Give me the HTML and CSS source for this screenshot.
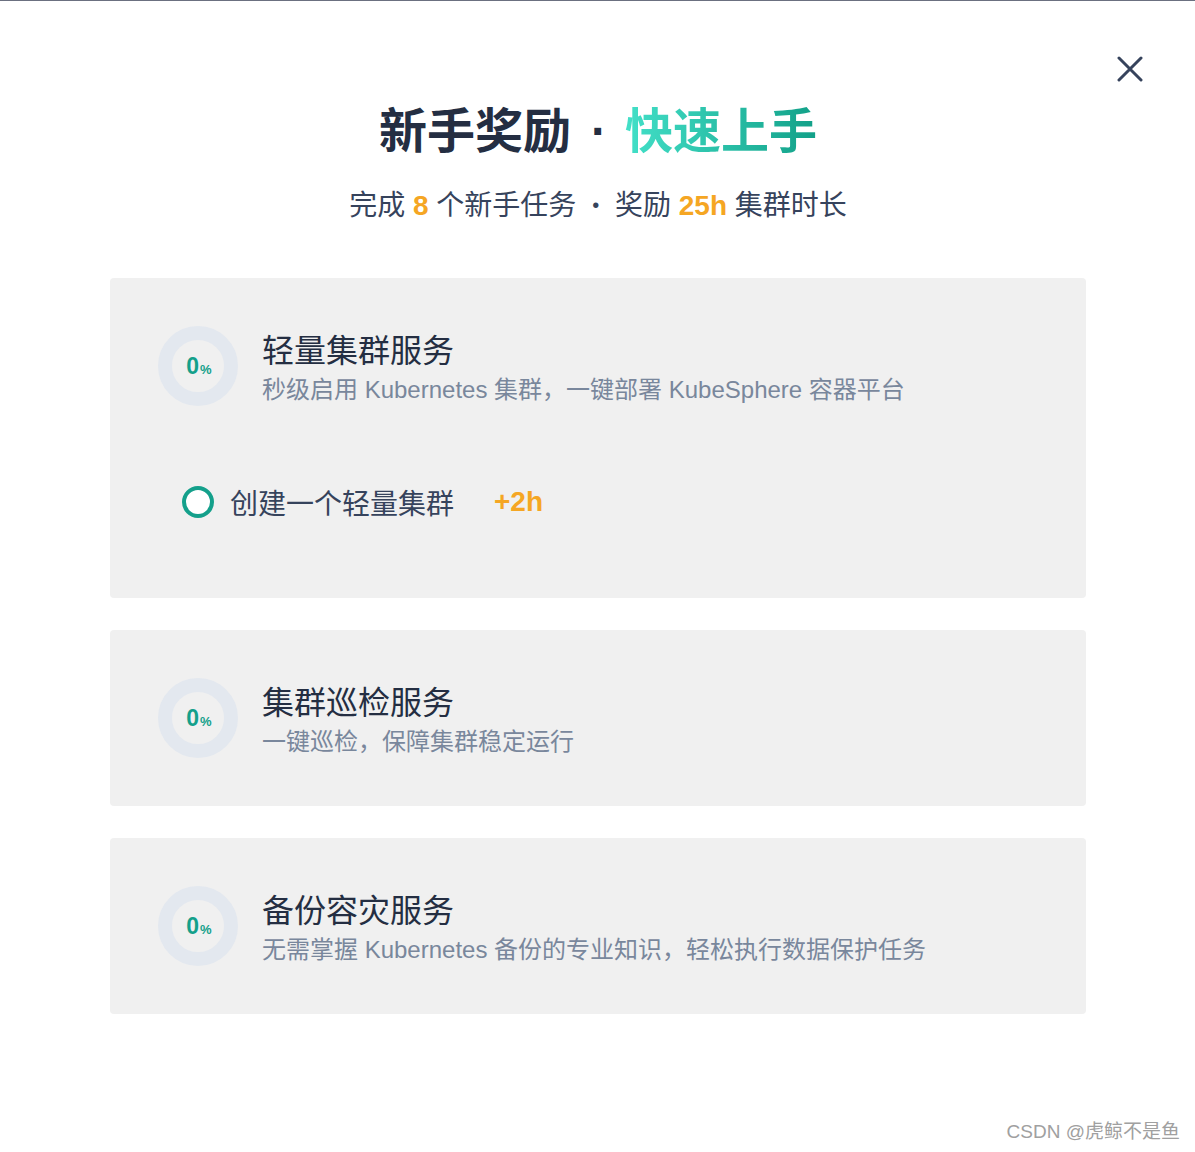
FILE: index.html
```html
<!DOCTYPE html>
<html lang="zh-CN">
<head>
<meta charset="utf-8">
<title>新手奖励</title>
<link rel="stylesheet" href="styles.css">
</head>
<body>
<div class="topline"></div>
<div class="modal">
  <button class="close" aria-label="关闭">
    <svg width="26" height="26" viewBox="0 0 26 26"><path d="M2 2 L24 24 M24 2 L2 24" stroke="#36435c" stroke-width="3" stroke-linecap="round"/></svg>
  </button>
  <h1 class="title">新手奖励<span class="mid">·</span><span class="grad">快速上手</span></h1>
  <p class="subtitle">完成 <b class="num">8</b> 个新手任务 <span class="dot">•</span> 奖励 <b class="num">25h</b> 集群时长</p>

  <div class="cards">
    <section class="card">
      <div class="card-head">
        <div class="ring"><span class="pct">0<small>%</small></span></div>
        <div class="info">
          <div class="name">轻量集群服务</div>
          <div class="desc">秒级启用 Kubernetes 集群，一键部署 KubeSphere 容器平台</div>
        </div>
      </div>
      <div class="tasks">
        <div class="task">
          <span class="check"></span>
          <span class="task-name">创建一个轻量集群</span>
          <span class="bonus">+2h</span>
        </div>
      </div>
    </section>

    <section class="card">
      <div class="card-head">
        <div class="ring"><span class="pct">0<small>%</small></span></div>
        <div class="info">
          <div class="name">集群巡检服务</div>
          <div class="desc">一键巡检，保障集群稳定运行</div>
        </div>
      </div>
    </section>

    <section class="card">
      <div class="card-head">
        <div class="ring"><span class="pct">0<small>%</small></span></div>
        <div class="info">
          <div class="name">备份容灾服务</div>
          <div class="desc">无需掌握 Kubernetes 备份的专业知识，轻松执行数据保护任务</div>
        </div>
      </div>
    </section>
  </div>
</div>
<div class="watermark">CSDN @虎鲸不是鱼</div>
</body>
</html>
```

FILE: styles.css
```css
* { box-sizing: border-box; }
html, body {
  margin: 0;
  padding: 0;
  background: #ffffff;
  font-family: "Liberation Sans", "Noto Sans CJK SC", sans-serif;
  color: #242e42;
}
body { height: 1152px; position: relative; overflow: hidden; }

.topline {
  height: 1px;
  background: #6b7080;
}

.modal {
  position: relative;
  padding: 98px 109px 0 110px;
}

.close {
  position: absolute;
  top: 55px;
  right: 52px;
  width: 26px;
  height: 26px;
  padding: 0;
  border: 0;
  background: none;
  display: flex;
}

.title {
  margin: 0;
  text-align: center;
  font-size: 48px;
  line-height: 66px;
  font-weight: 700;
  color: #242e42;
}
.mid {
  padding: 0 18px 0 20px;
}
.grad {
  background: linear-gradient(90deg, #43e0c8 0%, #12a088 100%);
  -webkit-background-clip: text;
  background-clip: text;
  color: transparent;
}

.subtitle {
  margin: 20px 0 0;
  text-align: center;
  font-size: 28px;
  line-height: 40px;
  color: #36435c;
}
.num {
  color: #f5a623;
  font-weight: 700;
  font-size: 28px;
}
.dot {
  font-size: 20px;
  padding: 0 8px;
  vertical-align: 3px;
}

.cards {
  margin-top: 52px;
  display: flex;
  flex-direction: column;
  gap: 32px;
}

.card {
  background: #f0f0f0;
  border-radius: 4px;
}

.card-head {
  height: 176px;
  display: flex;
  align-items: center;
  padding-left: 48px;
  gap: 24px;
}

.ring {
  width: 80px;
  height: 80px;
  border-radius: 50%;
  border: 14px solid #e3e8ef;
  display: flex;
  align-items: center;
  justify-content: center;
  flex: none;
}
.pct {
  font-size: 23px;
  font-weight: 700;
  color: #14a08b;
  line-height: 1;
  margin-top: 1px;
  margin-left: 2px;
}
.pct small {
  font-size: 13px;
  margin-left: 1px;
}

.info {
  display: flex;
  flex-direction: column;
  margin-top: 6px;
}
.name {
  font-size: 32px;
  line-height: 42px;
  color: #242e42;
}
.desc {
  font-size: 24px;
  line-height: 36px;
  color: #79879c;
}

.tasks {
  height: 144px;
  padding: 30px 0 0 72px;
}
.task {
  display: flex;
  align-items: center;
  height: 36px;
}
.check {
  width: 32px;
  height: 32px;
  border-radius: 50%;
  border: 4px solid #14a08b;
  background: #ffffff;
  flex: none;
}
.task-name {
  margin-left: 16px;
  font-size: 28px;
  color: #36435c;
}
.bonus {
  margin-left: 40px;
  font-size: 28px;
  font-weight: 700;
  color: #f5a623;
}

.watermark {
  position: absolute;
  right: 15px;
  top: 1119px;
  font-size: 19px;
  line-height: 26px;
  color: #a0a0a0;
}
```
